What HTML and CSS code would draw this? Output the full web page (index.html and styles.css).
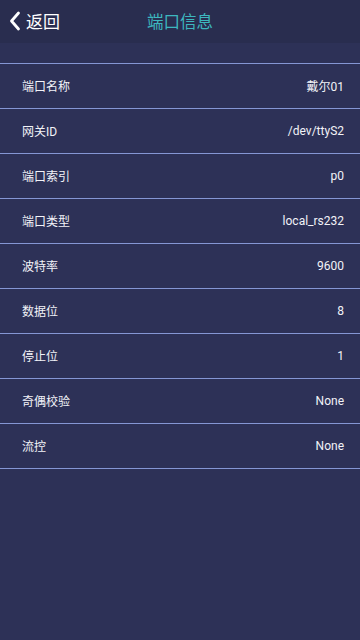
FILE: index.html
```html
<!DOCTYPE html>
<html lang="zh-CN">
<head>
    <meta charset="UTF-8">
    <meta name="viewport" content="width=device-width, initial-scale=1.0">
    <title>端口信息</title>
    <link rel="stylesheet" href="styles.css">
</head>
<body>
    <div class="header">
        <a class="back" href="#">
            <svg class="back-icon" width="12" height="20" viewBox="0 0 12 20">
                <path d="M9.5 2 L2.5 10 L9.5 18" fill="none" stroke="#fff" stroke-width="2.8" stroke-linecap="round" stroke-linejoin="round"/>
            </svg>
            <span>返回</span>
        </a>
        <div class="title">端口信息</div>
    </div>

    <div class="list">
        <div class="row"><span class="label">端口名称</span><span class="value">戴尔01</span></div>
        <div class="row"><span class="label">网关ID</span><span class="value">/dev/ttyS2</span></div>
        <div class="row"><span class="label">端口索引</span><span class="value">p0</span></div>
        <div class="row"><span class="label">端口类型</span><span class="value">local_rs232</span></div>
        <div class="row"><span class="label">波特率</span><span class="value">9600</span></div>
        <div class="row"><span class="label">数据位</span><span class="value">8</span></div>
        <div class="row"><span class="label">停止位</span><span class="value">1</span></div>
        <div class="row"><span class="label">奇偶校验</span><span class="value">None</span></div>
        <div class="row"><span class="label">流控</span><span class="value">None</span></div>
    </div>
</body>
</html>
```

FILE: styles.css
```css
body {
    margin: 0;
    min-height: 640px;
    background-color: #2d3157;
    font-family: Roboto, "Noto Sans CJK SC", sans-serif;
    color: #f2f3f8;
}
.header {
    position: relative;
    height: 43px;
    background-color: #292d4f;
    display: flex;
    align-items: center;
    justify-content: center;
}
.back {
    position: absolute;
    left: 9px;
    top: 0;
    height: 43px;
    display: flex;
    align-items: center;
    gap: 5px;
    color: #fff;
    text-decoration: none;
    font-size: 17px;
}
.back-icon {
    margin-bottom: 1px;
}
.back span {
    margin-bottom: 2px;
}
.title {
    color: #3db7bf;
    font-size: 16.5px;
    margin-bottom: 2px;
}
.list {
    margin-top: 20px;
    border-top: 1px solid #8596d4;
}
.row {
    height: 44px;
    display: flex;
    align-items: center;
    justify-content: space-between;
    padding: 0 16px 0 22px;
    border-bottom: 1px solid #8596d4;
    font-size: 12px;
}
.row span {
    margin-bottom: 1px;
}
```
